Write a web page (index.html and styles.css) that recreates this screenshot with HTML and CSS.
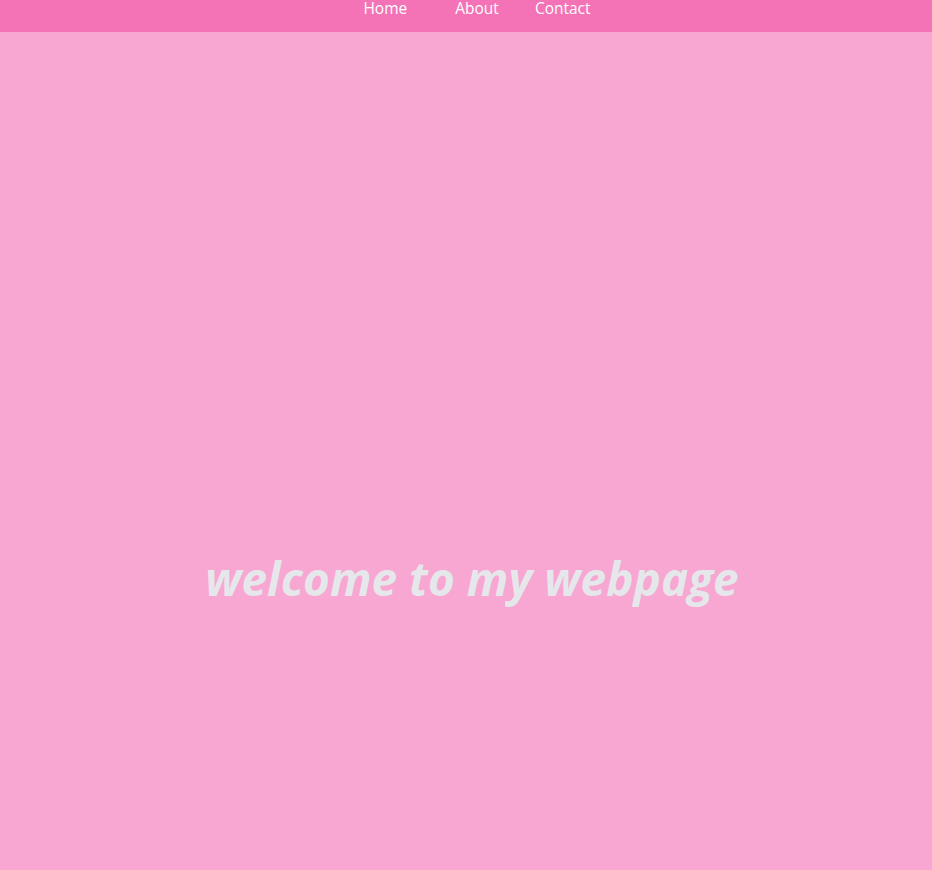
FILE: index.html
```html
<!DOCTYPE html>
<html lang="en">
<head>
<meta charset="utf-8">
<title>welcome</title>
<link rel="stylesheet" href="styles.css">
</head>
<body>
<header class="topbar">
  <nav class="nav">
    <a class="nav-link home" href="#">Home</a>
    <a class="nav-link about" href="#">About</a>
    <a class="nav-link contact" href="#">Contact</a>
  </nav>
</header>
<main class="hero">
  <h1 class="title">welcome to my webpage</h1>
</main>
</body>
</html>
```
FILE: styles.css
```css
html, body {
  margin: 0;
  padding: 0;
}
body {
  background: #f8a6d2;
  font-family: "Open Sans", "Noto Sans", sans-serif;
  height: 870px;
  overflow: hidden;
}
.topbar {
  background: #f472b6;
  height: 32px;
}
.nav {
  display: flex;
  justify-content: center;
  padding-left: 22px;
  line-height: 17px;
}
.nav-link {
  color: #ffffff;
  text-decoration: none;
  font-size: 15.5px;
}
.home { margin-right: 48px; }
.about { margin-right: 36px; }
.hero {
  display: flex;
  justify-content: center;
  padding-top: 516px;
  padding-left: 12px;
}
.title {
  margin: 0;
  color: #e5e7eb;
  font-size: 46px;
  font-weight: 700;
  font-style: italic;
  line-height: 60px;
}
```
